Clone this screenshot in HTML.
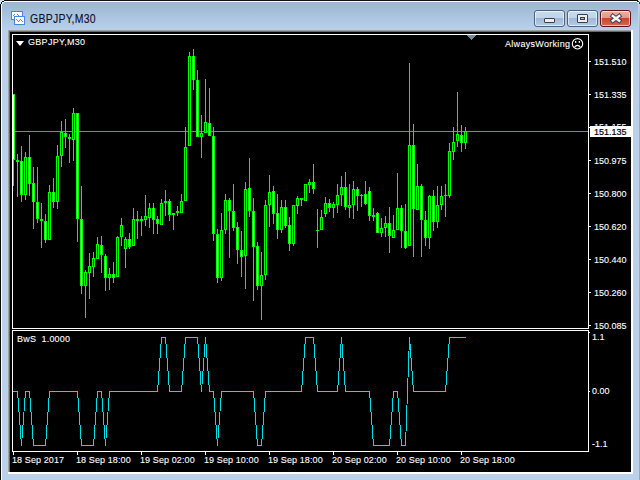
<!DOCTYPE html>
<html><head><meta charset="utf-8"><style>
html,body{margin:0;padding:0;}
body{width:640px;height:480px;overflow:hidden;position:relative;background:#9fe0f4;font-family:"Liberation Sans",sans-serif;}
.win{position:absolute;left:0;top:0;width:638px;height:480px;border-radius:5px 5px 0 0;background:#b9d1ea;box-sizing:border-box;}
.cap{position:absolute;left:0;top:0;width:638px;height:30px;border-radius:5px 5px 0 0;background:linear-gradient(#99b4d1,#b9d1ea);}
.edge-t{position:absolute;left:4px;top:0;width:634px;height:1px;background:#111;}
.edge-t2{position:absolute;left:3px;top:1px;width:634px;height:1px;background:#fff;}
.edge-l{position:absolute;left:0;top:4px;width:1px;height:476px;background:#080808;}
.edge-l2{position:absolute;left:1px;top:3px;width:1px;height:477px;background:#fff;}
.title{position:absolute;left:30px;top:11px;font-size:10.5px;line-height:13px;color:#10102a;white-space:nowrap;transform:scaleY(1.19);transform-origin:0 0;letter-spacing:0.25px;-webkit-text-stroke:0.1px #10102a;}
.btn{position:absolute;top:10px;height:17px;box-sizing:border-box;border:1px solid #50607a;border-radius:3px;background:linear-gradient(#c8dcf0 0,#c0d4ea 45%,#9cb8d6 46%,#b4cce4 100%);box-shadow:inset 0 0 0 1px rgba(255,255,255,0.6);}
.close{border-color:#5c1418;background:linear-gradient(#eab0a0 0,#e49888 45%,#c8442a 46%,#d86850 100%);}
.client{position:absolute;left:8px;top:30px;width:625px;height:444px;background:#000;}
.t{position:absolute;font-size:9px;line-height:12px;color:#fff;white-space:nowrap;transform:scaleY(1.1);transform-origin:0 0;-webkit-text-stroke:0.1px #fff;}
svg{position:absolute;left:0;top:0;}
</style></head><body>
<div class="win"></div>
<div class="cap"></div>
<div class="edge-t"></div><div class="edge-t2"></div><div class="edge-l"></div><div class="edge-l2"></div>
<div style="position:absolute;left:638px;top:5px;width:1px;height:475px;background:#c4d0e6"></div><div style="position:absolute;left:639px;top:0;width:1px;height:480px;background:linear-gradient(#a8e8f8 0,#40d4f0 30px,#30d0f0 100%)"></div>
<svg width="640" height="8" style="position:absolute;left:0;top:0" shape-rendering="crispEdges">
<rect x="0" y="0" width="4" height="1" fill="#d4e6f6"/><rect x="0" y="1" width="2" height="1" fill="#d4e6f6"/><rect x="0" y="2" width="1" height="2" fill="#d4e6f6"/>
<rect x="2" y="1" width="2" height="1" fill="#101010"/><rect x="1" y="2" width="1" height="2" fill="#101010"/>
<rect x="2" y="2" width="2" height="1" fill="#e8f0f8"/><rect x="2" y="3" width="1" height="1" fill="#e8f0f8"/>
<rect x="638" y="0" width="2" height="1" fill="#d4eef8"/><rect x="639" y="1" width="1" height="1" fill="#d4eef8"/>
<rect x="637" y="1" width="2" height="1" fill="#1c3c44"/><rect x="639" y="2" width="1" height="2" fill="#1c3c44"/>
<rect x="637" y="2" width="2" height="1" fill="#e0f0f8"/><rect x="638" y="3" width="1" height="2" fill="#c8dcec"/>
</svg>
<!-- icon -->
<svg width="30" height="30" style="position:absolute;left:0;top:0" shape-rendering="crispEdges">
<rect x="11" y="11" width="12" height="9" fill="#4a84f0"/><rect x="12" y="12" width="10" height="7" fill="#fff"/>
<rect x="14" y="16" width="11" height="9" fill="#4a84f0"/><rect x="15" y="17" width="9" height="7" fill="#fff"/>
<rect x="14" y="11" width="1" height="1" fill="#3c8c5c"/><rect x="17" y="11" width="1" height="1" fill="#3c8c5c"/><rect x="20" y="11" width="1" height="1" fill="#3c8c5c"/>
<rect x="17" y="24" width="1" height="1" fill="#3c8c5c"/><rect x="20" y="24" width="1" height="1" fill="#3c8c5c"/><rect x="24" y="19" width="1" height="1" fill="#3c8c5c"/><rect x="14" y="20" width="1" height="1" fill="#3c8c5c"/>
<rect x="13" y="15" width="1" height="1" fill="#4a84f0"/><rect x="14" y="14" width="1" height="1" fill="#4a84f0"/><rect x="17" y="14" width="1" height="1" fill="#4a84f0"/><rect x="18" y="15" width="1" height="1" fill="#4a84f0"/>
<rect x="16" y="19" width="1" height="1" fill="#4a84f0"/><rect x="17" y="20" width="1" height="1" fill="#4a84f0"/><rect x="18" y="21" width="1" height="1" fill="#4a84f0"/><rect x="19" y="20" width="1" height="1" fill="#4a84f0"/><rect x="20" y="19" width="1" height="1" fill="#4a84f0"/><rect x="21" y="20" width="1" height="1" fill="#4a84f0"/><rect x="22" y="21" width="1" height="1" fill="#4a84f0"/>
</svg>
<div class="title">GBPJPY,M30</div>
<div class="btn" style="left:534px;width:31px;"></div>
<div style="position:absolute;left:544px;top:18px;width:11px;height:5px;box-sizing:border-box;border:1px solid #3c3c50;border-radius:1px;background:#f0eee8;"></div>
<div class="btn" style="left:567px;width:31px;"></div>
<div style="position:absolute;left:577px;top:14px;width:11px;height:9px;box-sizing:border-box;border:1px solid #3c3c50;border-radius:1px;background:#f0eee8;"></div>
<div style="position:absolute;left:580px;top:17px;width:5px;height:3px;box-sizing:border-box;border:1px solid #3c3c50;background:#a8bcd4;"></div>
<div class="btn close" style="left:600px;width:31px;"></div>
<svg width="640" height="30" style="position:absolute;left:0;top:0">
<path d="M612.8 16 L619.2 20.8 M619.2 16 L612.8 20.8" stroke="#3a3a4a" stroke-width="4.3" stroke-linecap="square"/>
<path d="M612.8 16 L619.2 20.8 M619.2 16 L612.8 20.8" stroke="#f2f2f2" stroke-width="2.5" stroke-linecap="square"/>
</svg>
<!-- client sunken edge -->
<div style="position:absolute;left:8px;top:30px;width:624px;height:1px;background:#a0a0a0"></div>
<div style="position:absolute;left:8px;top:30px;width:1px;height:443px;background:#a0a0a0"></div>
<div style="position:absolute;left:9px;top:31px;width:622px;height:1px;background:#696969"></div>
<div style="position:absolute;left:9px;top:31px;width:1px;height:441px;background:#696969"></div>
<div style="position:absolute;left:10px;top:32px;width:621px;height:440px;background:#000"></div>
<div style="position:absolute;left:631px;top:30px;width:2px;height:444px;background:#fff"></div>
<div style="position:absolute;left:8px;top:472px;width:625px;height:2px;background:#fff"></div>
<svg width="640" height="480" shape-rendering="crispEdges">
<rect x="12" y="34" width="576" height="294" fill="none" stroke="#fff" stroke-width="1" transform="translate(0.5,0.5)"/>
<rect x="12" y="330" width="576" height="121" fill="none" stroke="#fff" stroke-width="1" transform="translate(0.5,0.5)"/>
<rect x="13" y="131" width="575" height="1" fill="#778899"/>
<rect x="13" y="94" width="1" height="92" fill="#00ff00"/>
<rect x="12" y="94" width="3" height="66" fill="#00ff00"/>
<rect x="13" y="95" width="1" height="64" fill="#ffffff"/>
<rect x="17" y="154" width="1" height="43" fill="#00ff00"/>
<rect x="16" y="160" width="3" height="2" fill="#00ff00"/>
<rect x="21" y="146" width="1" height="56" fill="#00ff00"/>
<rect x="20" y="161" width="3" height="34" fill="#00ff00"/>
<rect x="21" y="162" width="1" height="32" fill="#ffffff"/>
<rect x="25" y="152" width="1" height="48" fill="#00ff00"/>
<rect x="24" y="157" width="3" height="38" fill="#00ff00"/>
<rect x="25" y="158" width="1" height="36" fill="#000000"/>
<rect x="29" y="135" width="1" height="61" fill="#00ff00"/>
<rect x="28" y="157" width="3" height="27" fill="#00ff00"/>
<rect x="29" y="158" width="1" height="25" fill="#ffffff"/>
<rect x="33" y="167" width="1" height="62" fill="#00ff00"/>
<rect x="32" y="183" width="3" height="19" fill="#00ff00"/>
<rect x="33" y="184" width="1" height="17" fill="#ffffff"/>
<rect x="37" y="167" width="1" height="56" fill="#00ff00"/>
<rect x="36" y="202" width="3" height="17" fill="#00ff00"/>
<rect x="37" y="203" width="1" height="15" fill="#ffffff"/>
<rect x="41" y="203" width="1" height="45" fill="#00ff00"/>
<rect x="40" y="219" width="3" height="2" fill="#00ff00"/>
<rect x="45" y="214" width="1" height="29" fill="#00ff00"/>
<rect x="44" y="221" width="3" height="19" fill="#00ff00"/>
<rect x="45" y="222" width="1" height="17" fill="#ffffff"/>
<rect x="49" y="185" width="1" height="55" fill="#00ff00"/>
<rect x="48" y="192" width="3" height="48" fill="#00ff00"/>
<rect x="49" y="193" width="1" height="46" fill="#000000"/>
<rect x="53" y="178" width="1" height="30" fill="#00ff00"/>
<rect x="52" y="192" width="3" height="10" fill="#00ff00"/>
<rect x="53" y="193" width="1" height="8" fill="#ffffff"/>
<rect x="57" y="145" width="1" height="64" fill="#00ff00"/>
<rect x="56" y="156" width="3" height="46" fill="#00ff00"/>
<rect x="57" y="157" width="1" height="44" fill="#000000"/>
<rect x="61" y="121" width="1" height="46" fill="#00ff00"/>
<rect x="60" y="132" width="3" height="24" fill="#00ff00"/>
<rect x="61" y="133" width="1" height="22" fill="#000000"/>
<rect x="65" y="119" width="1" height="29" fill="#00ff00"/>
<rect x="64" y="133" width="3" height="4" fill="#00ff00"/>
<rect x="65" y="134" width="1" height="2" fill="#ffffff"/>
<rect x="69" y="134" width="1" height="29" fill="#00ff00"/>
<rect x="68" y="137" width="3" height="2" fill="#00ff00"/>
<rect x="73" y="108" width="1" height="53" fill="#00ff00"/>
<rect x="72" y="113" width="3" height="27" fill="#00ff00"/>
<rect x="73" y="114" width="1" height="25" fill="#000000"/>
<rect x="77" y="113" width="1" height="129" fill="#00ff00"/>
<rect x="76" y="113" width="3" height="106" fill="#00ff00"/>
<rect x="77" y="114" width="1" height="104" fill="#ffffff"/>
<rect x="81" y="186" width="1" height="108" fill="#00ff00"/>
<rect x="80" y="219" width="3" height="67" fill="#00ff00"/>
<rect x="81" y="220" width="1" height="65" fill="#ffffff"/>
<rect x="85" y="270" width="1" height="48" fill="#00ff00"/>
<rect x="84" y="272" width="3" height="14" fill="#00ff00"/>
<rect x="85" y="273" width="1" height="12" fill="#000000"/>
<rect x="89" y="253" width="1" height="46" fill="#00ff00"/>
<rect x="88" y="266" width="3" height="7" fill="#00ff00"/>
<rect x="89" y="267" width="1" height="5" fill="#000000"/>
<rect x="93" y="252" width="1" height="25" fill="#00ff00"/>
<rect x="92" y="258" width="3" height="9" fill="#00ff00"/>
<rect x="93" y="259" width="1" height="7" fill="#000000"/>
<rect x="97" y="237" width="1" height="22" fill="#00ff00"/>
<rect x="96" y="244" width="3" height="15" fill="#00ff00"/>
<rect x="97" y="245" width="1" height="13" fill="#000000"/>
<rect x="101" y="236" width="1" height="37" fill="#00ff00"/>
<rect x="100" y="245" width="3" height="10" fill="#00ff00"/>
<rect x="101" y="246" width="1" height="8" fill="#ffffff"/>
<rect x="105" y="254" width="1" height="37" fill="#00ff00"/>
<rect x="104" y="256" width="3" height="22" fill="#00ff00"/>
<rect x="105" y="257" width="1" height="20" fill="#ffffff"/>
<rect x="109" y="268" width="1" height="22" fill="#00ff00"/>
<rect x="108" y="274" width="3" height="4" fill="#00ff00"/>
<rect x="109" y="275" width="1" height="2" fill="#000000"/>
<rect x="113" y="262" width="1" height="21" fill="#00ff00"/>
<rect x="112" y="274" width="3" height="4" fill="#00ff00"/>
<rect x="113" y="275" width="1" height="2" fill="#ffffff"/>
<rect x="117" y="236" width="1" height="41" fill="#00ff00"/>
<rect x="116" y="237" width="3" height="40" fill="#00ff00"/>
<rect x="117" y="238" width="1" height="38" fill="#000000"/>
<rect x="121" y="218" width="1" height="28" fill="#00ff00"/>
<rect x="120" y="225" width="3" height="12" fill="#00ff00"/>
<rect x="121" y="226" width="1" height="10" fill="#000000"/>
<rect x="125" y="237" width="1" height="31" fill="#00ff00"/>
<rect x="124" y="239" width="3" height="10" fill="#00ff00"/>
<rect x="125" y="240" width="1" height="8" fill="#000000"/>
<rect x="129" y="233" width="1" height="16" fill="#00ff00"/>
<rect x="128" y="239" width="3" height="8" fill="#00ff00"/>
<rect x="129" y="240" width="1" height="6" fill="#ffffff"/>
<rect x="133" y="208" width="1" height="38" fill="#00ff00"/>
<rect x="132" y="219" width="3" height="27" fill="#00ff00"/>
<rect x="133" y="220" width="1" height="25" fill="#000000"/>
<rect x="137" y="211" width="1" height="28" fill="#00ff00"/>
<rect x="136" y="219" width="3" height="2" fill="#00ff00"/>
<rect x="141" y="216" width="1" height="20" fill="#00ff00"/>
<rect x="140" y="219" width="3" height="2" fill="#00ff00"/>
<rect x="145" y="195" width="1" height="31" fill="#00ff00"/>
<rect x="144" y="216" width="3" height="4" fill="#00ff00"/>
<rect x="145" y="217" width="1" height="2" fill="#000000"/>
<rect x="149" y="203" width="1" height="25" fill="#00ff00"/>
<rect x="148" y="208" width="3" height="10" fill="#00ff00"/>
<rect x="149" y="209" width="1" height="8" fill="#000000"/>
<rect x="153" y="203" width="1" height="31" fill="#00ff00"/>
<rect x="152" y="208" width="3" height="12" fill="#00ff00"/>
<rect x="153" y="209" width="1" height="10" fill="#ffffff"/>
<rect x="157" y="216" width="1" height="18" fill="#00ff00"/>
<rect x="156" y="219" width="3" height="5" fill="#00ff00"/>
<rect x="157" y="220" width="1" height="3" fill="#ffffff"/>
<rect x="161" y="199" width="1" height="26" fill="#00ff00"/>
<rect x="160" y="203" width="3" height="22" fill="#00ff00"/>
<rect x="161" y="204" width="1" height="20" fill="#000000"/>
<rect x="165" y="190" width="1" height="26" fill="#00ff00"/>
<rect x="164" y="201" width="3" height="2" fill="#00ff00"/>
<rect x="169" y="199" width="1" height="22" fill="#00ff00"/>
<rect x="168" y="201" width="3" height="14" fill="#00ff00"/>
<rect x="169" y="202" width="1" height="12" fill="#ffffff"/>
<rect x="173" y="213" width="1" height="17" fill="#00ff00"/>
<rect x="172" y="213" width="3" height="2" fill="#00ff00"/>
<rect x="177" y="206" width="1" height="10" fill="#00ff00"/>
<rect x="176" y="211" width="3" height="2" fill="#00ff00"/>
<rect x="181" y="194" width="1" height="19" fill="#00ff00"/>
<rect x="180" y="201" width="3" height="12" fill="#00ff00"/>
<rect x="181" y="202" width="1" height="10" fill="#000000"/>
<rect x="185" y="127" width="1" height="74" fill="#00ff00"/>
<rect x="184" y="147" width="3" height="54" fill="#00ff00"/>
<rect x="185" y="148" width="1" height="52" fill="#000000"/>
<rect x="189" y="52" width="1" height="94" fill="#00ff00"/>
<rect x="188" y="56" width="3" height="90" fill="#00ff00"/>
<rect x="189" y="57" width="1" height="88" fill="#000000"/>
<rect x="193" y="49" width="1" height="41" fill="#00ff00"/>
<rect x="192" y="56" width="3" height="24" fill="#00ff00"/>
<rect x="193" y="57" width="1" height="22" fill="#ffffff"/>
<rect x="197" y="70" width="1" height="67" fill="#00ff00"/>
<rect x="196" y="80" width="3" height="57" fill="#00ff00"/>
<rect x="197" y="81" width="1" height="55" fill="#ffffff"/>
<rect x="201" y="115" width="1" height="43" fill="#00ff00"/>
<rect x="200" y="133" width="3" height="4" fill="#00ff00"/>
<rect x="201" y="134" width="1" height="2" fill="#000000"/>
<rect x="205" y="79" width="1" height="54" fill="#00ff00"/>
<rect x="204" y="122" width="3" height="11" fill="#00ff00"/>
<rect x="205" y="123" width="1" height="9" fill="#000000"/>
<rect x="209" y="88" width="1" height="48" fill="#00ff00"/>
<rect x="208" y="123" width="3" height="13" fill="#00ff00"/>
<rect x="209" y="124" width="1" height="11" fill="#ffffff"/>
<rect x="213" y="127" width="1" height="114" fill="#00ff00"/>
<rect x="212" y="136" width="3" height="98" fill="#00ff00"/>
<rect x="213" y="137" width="1" height="96" fill="#ffffff"/>
<rect x="217" y="229" width="1" height="54" fill="#00ff00"/>
<rect x="216" y="234" width="3" height="44" fill="#00ff00"/>
<rect x="217" y="235" width="1" height="42" fill="#ffffff"/>
<rect x="221" y="213" width="1" height="68" fill="#00ff00"/>
<rect x="220" y="230" width="3" height="48" fill="#00ff00"/>
<rect x="221" y="231" width="1" height="46" fill="#000000"/>
<rect x="225" y="194" width="1" height="40" fill="#00ff00"/>
<rect x="224" y="200" width="3" height="30" fill="#00ff00"/>
<rect x="225" y="201" width="1" height="28" fill="#000000"/>
<rect x="229" y="198" width="1" height="60" fill="#00ff00"/>
<rect x="228" y="200" width="3" height="11" fill="#00ff00"/>
<rect x="229" y="201" width="1" height="9" fill="#ffffff"/>
<rect x="233" y="184" width="1" height="47" fill="#00ff00"/>
<rect x="232" y="211" width="3" height="17" fill="#00ff00"/>
<rect x="233" y="212" width="1" height="15" fill="#ffffff"/>
<rect x="237" y="222" width="1" height="42" fill="#00ff00"/>
<rect x="236" y="227" width="3" height="23" fill="#00ff00"/>
<rect x="237" y="228" width="1" height="21" fill="#ffffff"/>
<rect x="241" y="231" width="1" height="46" fill="#00ff00"/>
<rect x="240" y="250" width="3" height="7" fill="#00ff00"/>
<rect x="241" y="251" width="1" height="5" fill="#ffffff"/>
<rect x="245" y="182" width="1" height="107" fill="#00ff00"/>
<rect x="244" y="189" width="3" height="67" fill="#00ff00"/>
<rect x="245" y="190" width="1" height="65" fill="#000000"/>
<rect x="249" y="158" width="1" height="59" fill="#00ff00"/>
<rect x="248" y="188" width="3" height="23" fill="#00ff00"/>
<rect x="249" y="189" width="1" height="21" fill="#ffffff"/>
<rect x="253" y="198" width="1" height="103" fill="#00ff00"/>
<rect x="252" y="211" width="3" height="36" fill="#00ff00"/>
<rect x="253" y="212" width="1" height="34" fill="#ffffff"/>
<rect x="257" y="242" width="1" height="48" fill="#00ff00"/>
<rect x="256" y="246" width="3" height="40" fill="#00ff00"/>
<rect x="257" y="247" width="1" height="38" fill="#ffffff"/>
<rect x="261" y="252" width="1" height="68" fill="#00ff00"/>
<rect x="260" y="275" width="3" height="11" fill="#00ff00"/>
<rect x="261" y="276" width="1" height="9" fill="#000000"/>
<rect x="265" y="200" width="1" height="80" fill="#00ff00"/>
<rect x="264" y="205" width="3" height="70" fill="#00ff00"/>
<rect x="265" y="206" width="1" height="68" fill="#000000"/>
<rect x="269" y="175" width="1" height="52" fill="#00ff00"/>
<rect x="268" y="192" width="3" height="13" fill="#00ff00"/>
<rect x="269" y="193" width="1" height="11" fill="#000000"/>
<rect x="273" y="186" width="1" height="38" fill="#00ff00"/>
<rect x="272" y="191" width="3" height="23" fill="#00ff00"/>
<rect x="273" y="192" width="1" height="21" fill="#ffffff"/>
<rect x="277" y="194" width="1" height="45" fill="#00ff00"/>
<rect x="276" y="213" width="3" height="17" fill="#00ff00"/>
<rect x="277" y="214" width="1" height="15" fill="#ffffff"/>
<rect x="281" y="200" width="1" height="33" fill="#00ff00"/>
<rect x="280" y="207" width="3" height="23" fill="#00ff00"/>
<rect x="281" y="208" width="1" height="21" fill="#000000"/>
<rect x="285" y="200" width="1" height="28" fill="#00ff00"/>
<rect x="284" y="207" width="3" height="19" fill="#00ff00"/>
<rect x="285" y="208" width="1" height="17" fill="#ffffff"/>
<rect x="289" y="217" width="1" height="34" fill="#00ff00"/>
<rect x="288" y="225" width="3" height="19" fill="#00ff00"/>
<rect x="289" y="226" width="1" height="17" fill="#ffffff"/>
<rect x="293" y="205" width="1" height="41" fill="#00ff00"/>
<rect x="292" y="205" width="3" height="39" fill="#00ff00"/>
<rect x="293" y="206" width="1" height="37" fill="#000000"/>
<rect x="297" y="196" width="1" height="18" fill="#00ff00"/>
<rect x="296" y="198" width="3" height="8" fill="#00ff00"/>
<rect x="297" y="199" width="1" height="6" fill="#000000"/>
<rect x="301" y="198" width="1" height="8" fill="#00ff00"/>
<rect x="300" y="198" width="3" height="2" fill="#00ff00"/>
<rect x="305" y="184" width="1" height="17" fill="#00ff00"/>
<rect x="304" y="184" width="3" height="17" fill="#00ff00"/>
<rect x="305" y="185" width="1" height="15" fill="#000000"/>
<rect x="309" y="179" width="1" height="14" fill="#00ff00"/>
<rect x="308" y="182" width="3" height="3" fill="#00ff00"/>
<rect x="309" y="183" width="1" height="1" fill="#000000"/>
<rect x="313" y="164" width="1" height="30" fill="#00ff00"/>
<rect x="312" y="182" width="3" height="7" fill="#00ff00"/>
<rect x="313" y="183" width="1" height="5" fill="#ffffff"/>
<rect x="317" y="209" width="1" height="39" fill="#00ff00"/>
<rect x="316" y="230" width="3" height="1" fill="#00ff00"/>
<rect x="321" y="210" width="1" height="20" fill="#00ff00"/>
<rect x="320" y="217" width="3" height="13" fill="#00ff00"/>
<rect x="321" y="218" width="1" height="11" fill="#000000"/>
<rect x="325" y="197" width="1" height="20" fill="#00ff00"/>
<rect x="324" y="203" width="3" height="11" fill="#00ff00"/>
<rect x="325" y="204" width="1" height="9" fill="#000000"/>
<rect x="329" y="199" width="1" height="13" fill="#00ff00"/>
<rect x="328" y="203" width="3" height="5" fill="#00ff00"/>
<rect x="329" y="204" width="1" height="3" fill="#ffffff"/>
<rect x="333" y="202" width="1" height="16" fill="#00ff00"/>
<rect x="332" y="204" width="3" height="4" fill="#00ff00"/>
<rect x="333" y="205" width="1" height="2" fill="#000000"/>
<rect x="337" y="184" width="1" height="29" fill="#00ff00"/>
<rect x="336" y="195" width="3" height="10" fill="#00ff00"/>
<rect x="337" y="196" width="1" height="8" fill="#000000"/>
<rect x="341" y="176" width="1" height="30" fill="#00ff00"/>
<rect x="340" y="187" width="3" height="8" fill="#00ff00"/>
<rect x="341" y="188" width="1" height="6" fill="#000000"/>
<rect x="345" y="172" width="1" height="38" fill="#00ff00"/>
<rect x="344" y="187" width="3" height="20" fill="#00ff00"/>
<rect x="345" y="188" width="1" height="18" fill="#ffffff"/>
<rect x="349" y="184" width="1" height="34" fill="#00ff00"/>
<rect x="348" y="205" width="3" height="3" fill="#00ff00"/>
<rect x="349" y="206" width="1" height="1" fill="#000000"/>
<rect x="353" y="181" width="1" height="38" fill="#00ff00"/>
<rect x="352" y="189" width="3" height="16" fill="#00ff00"/>
<rect x="353" y="190" width="1" height="14" fill="#000000"/>
<rect x="357" y="187" width="1" height="24" fill="#00ff00"/>
<rect x="356" y="189" width="3" height="7" fill="#00ff00"/>
<rect x="357" y="190" width="1" height="5" fill="#ffffff"/>
<rect x="361" y="194" width="1" height="13" fill="#00ff00"/>
<rect x="360" y="195" width="3" height="1" fill="#00ff00"/>
<rect x="365" y="181" width="1" height="24" fill="#00ff00"/>
<rect x="364" y="194" width="3" height="10" fill="#00ff00"/>
<rect x="365" y="195" width="1" height="8" fill="#ffffff"/>
<rect x="369" y="187" width="1" height="34" fill="#00ff00"/>
<rect x="368" y="191" width="3" height="25" fill="#00ff00"/>
<rect x="369" y="192" width="1" height="23" fill="#ffffff"/>
<rect x="373" y="208" width="1" height="13" fill="#00ff00"/>
<rect x="372" y="215" width="3" height="2" fill="#00ff00"/>
<rect x="377" y="212" width="1" height="21" fill="#00ff00"/>
<rect x="376" y="213" width="3" height="20" fill="#00ff00"/>
<rect x="377" y="214" width="1" height="18" fill="#ffffff"/>
<rect x="381" y="218" width="1" height="19" fill="#00ff00"/>
<rect x="380" y="228" width="3" height="5" fill="#00ff00"/>
<rect x="381" y="229" width="1" height="3" fill="#000000"/>
<rect x="385" y="216" width="1" height="21" fill="#00ff00"/>
<rect x="384" y="223" width="3" height="5" fill="#00ff00"/>
<rect x="385" y="224" width="1" height="3" fill="#000000"/>
<rect x="389" y="207" width="1" height="46" fill="#00ff00"/>
<rect x="388" y="223" width="3" height="13" fill="#00ff00"/>
<rect x="389" y="224" width="1" height="11" fill="#ffffff"/>
<rect x="393" y="215" width="1" height="23" fill="#00ff00"/>
<rect x="392" y="230" width="3" height="8" fill="#00ff00"/>
<rect x="393" y="231" width="1" height="6" fill="#000000"/>
<rect x="397" y="173" width="1" height="57" fill="#00ff00"/>
<rect x="396" y="208" width="3" height="22" fill="#00ff00"/>
<rect x="397" y="209" width="1" height="20" fill="#000000"/>
<rect x="401" y="205" width="1" height="43" fill="#00ff00"/>
<rect x="400" y="208" width="3" height="23" fill="#00ff00"/>
<rect x="401" y="209" width="1" height="21" fill="#ffffff"/>
<rect x="405" y="204" width="1" height="45" fill="#00ff00"/>
<rect x="404" y="231" width="3" height="17" fill="#00ff00"/>
<rect x="405" y="232" width="1" height="15" fill="#ffffff"/>
<rect x="409" y="63" width="1" height="183" fill="#00ff00"/>
<rect x="408" y="145" width="3" height="101" fill="#00ff00"/>
<rect x="409" y="146" width="1" height="99" fill="#000000"/>
<rect x="413" y="124" width="1" height="133" fill="#00ff00"/>
<rect x="412" y="145" width="3" height="64" fill="#00ff00"/>
<rect x="413" y="146" width="1" height="62" fill="#ffffff"/>
<rect x="417" y="164" width="1" height="46" fill="#00ff00"/>
<rect x="416" y="186" width="3" height="24" fill="#00ff00"/>
<rect x="417" y="187" width="1" height="22" fill="#000000"/>
<rect x="421" y="184" width="1" height="73" fill="#00ff00"/>
<rect x="420" y="186" width="3" height="34" fill="#00ff00"/>
<rect x="421" y="187" width="1" height="32" fill="#ffffff"/>
<rect x="425" y="211" width="1" height="35" fill="#00ff00"/>
<rect x="424" y="220" width="3" height="18" fill="#00ff00"/>
<rect x="425" y="221" width="1" height="16" fill="#ffffff"/>
<rect x="429" y="195" width="1" height="54" fill="#00ff00"/>
<rect x="428" y="196" width="3" height="42" fill="#00ff00"/>
<rect x="429" y="197" width="1" height="40" fill="#000000"/>
<rect x="433" y="190" width="1" height="41" fill="#00ff00"/>
<rect x="432" y="196" width="3" height="26" fill="#00ff00"/>
<rect x="433" y="197" width="1" height="24" fill="#ffffff"/>
<rect x="437" y="186" width="1" height="42" fill="#00ff00"/>
<rect x="436" y="205" width="3" height="17" fill="#00ff00"/>
<rect x="437" y="206" width="1" height="15" fill="#000000"/>
<rect x="441" y="186" width="1" height="24" fill="#00ff00"/>
<rect x="440" y="196" width="3" height="9" fill="#00ff00"/>
<rect x="441" y="197" width="1" height="7" fill="#000000"/>
<rect x="445" y="184" width="1" height="33" fill="#00ff00"/>
<rect x="444" y="195" width="3" height="1" fill="#00ff00"/>
<rect x="449" y="143" width="1" height="55" fill="#00ff00"/>
<rect x="448" y="151" width="3" height="45" fill="#00ff00"/>
<rect x="449" y="152" width="1" height="43" fill="#000000"/>
<rect x="453" y="127" width="1" height="33" fill="#00ff00"/>
<rect x="452" y="142" width="3" height="10" fill="#00ff00"/>
<rect x="453" y="143" width="1" height="8" fill="#000000"/>
<rect x="457" y="92" width="1" height="55" fill="#00ff00"/>
<rect x="456" y="134" width="3" height="7" fill="#00ff00"/>
<rect x="457" y="135" width="1" height="5" fill="#000000"/>
<rect x="461" y="125" width="1" height="27" fill="#00ff00"/>
<rect x="460" y="135" width="3" height="8" fill="#00ff00"/>
<rect x="461" y="136" width="1" height="6" fill="#ffffff"/>
<rect x="465" y="127" width="1" height="22" fill="#00ff00"/>
<rect x="464" y="131" width="3" height="12" fill="#00ff00"/>
<rect x="465" y="132" width="1" height="10" fill="#000000"/>
<rect x="12" y="34" width="576" height="294" fill="none" stroke="#fff" stroke-width="1" transform="translate(0.5,0.5)"/>
<rect x="589" y="61" width="2" height="1" fill="#fff"/>
<rect x="589" y="94" width="2" height="1" fill="#fff"/>
<rect x="589" y="127" width="2" height="1" fill="#fff"/>
<rect x="589" y="160" width="2" height="1" fill="#fff"/>
<rect x="589" y="193" width="2" height="1" fill="#fff"/>
<rect x="589" y="226" width="2" height="1" fill="#fff"/>
<rect x="589" y="259" width="2" height="1" fill="#fff"/>
<rect x="589" y="292" width="2" height="1" fill="#fff"/>
<rect x="589" y="325" width="2" height="1" fill="#fff"/>
<rect x="589" y="332" width="1" height="1" fill="#fff"/>
<rect x="589" y="391" width="1" height="1" fill="#fff"/>
<rect x="13" y="452" width="1" height="3" fill="#fff"/>
<rect x="77" y="452" width="1" height="3" fill="#fff"/>
<rect x="141" y="452" width="1" height="3" fill="#fff"/>
<rect x="205" y="452" width="1" height="3" fill="#fff"/>
<rect x="269" y="452" width="1" height="3" fill="#fff"/>
<rect x="333" y="452" width="1" height="3" fill="#fff"/>
<rect x="397" y="452" width="1" height="3" fill="#fff"/>
<rect x="461" y="452" width="1" height="3" fill="#fff"/>
<polygon points="467,35 476,35 471.5,40.5" fill="#778899"/>
</svg>
<svg width="640" height="480" shape-rendering="crispEdges">
<polyline points="13.5,391.5 17.5,391.5 21.5,445.5 25.5,391.5 29.5,391.5 33.5,445.5 37.5,445.5 41.5,445.5 45.5,445.5 49.5,391.5 53.5,391.5 57.5,391.5 61.5,391.5 65.5,391.5 69.5,391.5 73.5,391.5 77.5,391.5 81.5,445.5 85.5,445.5 89.5,445.5 93.5,445.5 97.5,391.5 101.5,391.5 105.5,445.5 109.5,391.5 113.5,391.5 117.5,391.5 121.5,391.5 125.5,391.5 129.5,391.5 133.5,391.5 137.5,391.5 141.5,391.5 145.5,391.5 149.5,391.5 153.5,391.5 157.5,391.5 161.5,337.5 165.5,337.5 169.5,391.5 173.5,391.5 177.5,391.5 181.5,391.5 185.5,337.5 189.5,337.5 193.5,337.5 197.5,337.5 201.5,391.5 205.5,337.5 209.5,391.5 213.5,391.5 217.5,445.5 221.5,391.5 225.5,391.5 229.5,391.5 233.5,391.5 237.5,391.5 241.5,391.5 245.5,391.5 249.5,391.5 253.5,391.5 257.5,445.5 261.5,445.5 265.5,391.5 269.5,391.5 273.5,391.5 277.5,391.5 281.5,391.5 285.5,391.5 289.5,391.5 293.5,391.5 297.5,391.5 301.5,391.5 305.5,337.5 309.5,337.5 313.5,337.5 317.5,391.5 321.5,391.5 325.5,391.5 329.5,391.5 333.5,391.5 337.5,391.5 341.5,337.5 345.5,391.5 349.5,391.5 353.5,391.5 357.5,391.5 361.5,391.5 365.5,391.5 369.5,391.5 373.5,445.5 377.5,445.5 381.5,445.5 385.5,445.5 389.5,445.5 393.5,391.5 397.5,391.5 401.5,445.5 405.5,445.5 409.5,337.5 413.5,391.5 417.5,391.5 421.5,391.5 425.5,391.5 429.5,391.5 433.5,391.5 437.5,391.5 441.5,391.5 445.5,391.5 449.5,337.5 453.5,337.5 457.5,337.5 461.5,337.5 465.5,337.5" fill="none" stroke="#00e0e8" stroke-width="1"/><rect x="13" y="391" width="1" height="1" fill="#00e0e8"/>
</svg>
<div class="t" style="left:594px;top:55px">151.510</div>
<div class="t" style="left:594px;top:88px">151.335</div>
<div class="t" style="left:594px;top:120px">151.155</div>
<div class="t" style="left:594px;top:154px">150.975</div>
<div class="t" style="left:594px;top:187px">150.800</div>
<div class="t" style="left:594px;top:220px">150.620</div>
<div class="t" style="left:594px;top:253px">150.440</div>
<div class="t" style="left:594px;top:286px">150.260</div>
<div class="t" style="left:594px;top:319px">150.085</div>
<div class="t" style="left:592px;top:330px">1.1</div>
<div class="t" style="left:592px;top:384px">0.00</div>
<div class="t" style="left:592px;top:437px">-1.1</div>
<div class="t" style="left:12px;top:453px;letter-spacing:0.1px">18 Sep 2017</div>
<div class="t" style="left:76px;top:453px;letter-spacing:0.1px">18 Sep 18:00</div>
<div class="t" style="left:140px;top:453px;letter-spacing:0.1px">19 Sep 02:00</div>
<div class="t" style="left:204px;top:453px;letter-spacing:0.1px">19 Sep 10:00</div>
<div class="t" style="left:268px;top:453px;letter-spacing:0.1px">19 Sep 18:00</div>
<div class="t" style="left:332px;top:453px;letter-spacing:0.1px">20 Sep 02:00</div>
<div class="t" style="left:396px;top:453px;letter-spacing:0.1px">20 Sep 10:00</div>
<div class="t" style="left:460px;top:453px;letter-spacing:0.1px">20 Sep 18:00</div>
<div style="position:absolute;left:590px;top:126px;width:41px;height:11px;background:#fff"></div>
<div class="t" style="left:594px;top:125px;color:#000;-webkit-text-stroke:0.2px #000">151.135</div>
<div style="position:absolute;left:16px;top:41px;width:0;height:0;border-left:4px solid transparent;border-right:4px solid transparent;border-top:5px solid #fff"></div>
<div class="t" style="left:28px;top:35px;letter-spacing:0.3px">GBPJPY,M30</div>
<div class="t" style="left:505px;top:37px;letter-spacing:0.3px">AlwaysWorking</div>
<svg width="640" height="480"><circle cx="577.5" cy="43.8" r="5.2" fill="none" stroke="#fff" stroke-width="1.1"/>
<rect x="575" y="41" width="1.3" height="1.8" fill="#fff"/><rect x="578.7" y="41" width="1.3" height="1.8" fill="#fff"/>
<path d="M574.6 47.2 Q577.5 43.6 580.4 47.2" fill="none" stroke="#fff" stroke-width="1.1"/></svg>
<div class="t" style="left:17px;top:332px;letter-spacing:0.2px">BwS&nbsp;&nbsp;1.0000</div>
</body></html>
